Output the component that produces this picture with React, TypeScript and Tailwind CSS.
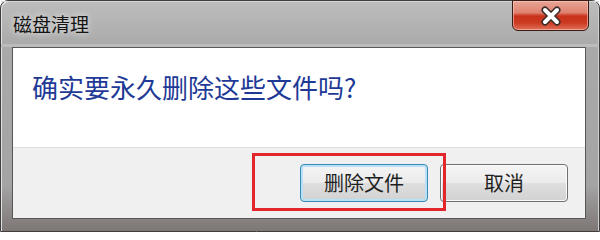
import React from "react";

const font = { fontFamily: '"Noto Sans CJK SC", "Noto Sans", sans-serif' };

function CloseX() {
  return (
    <svg width="26" height="22" viewBox="0 0 26 22">
      <path d="M7 5 L19 17 M19 5 L7 17" stroke="#3a2a28" strokeWidth="7" strokeLinecap="round" />
      <path d="M7 5 L19 17 M19 5 L7 17" stroke="#ffffff" strokeWidth="4" strokeLinecap="round" />
    </svg>
  );
}

export default function App() {
  return (
    <div className="w-[600px] h-[232px] overflow-hidden bg-white">
      <div
        className="relative w-[600px] h-[232px] flex flex-col border border-[#3e3e3e] rounded-t-[8px] bg-[linear-gradient(180deg,#bdbdbd_0%,#a9a9a9_20%,#a4a4a4_80%,#7d7775_100%)] shadow-[inset_1px_1px_0_#e2e2e2,inset_-1px_0_0_#d0d0d0]"
        style={font}
      >
        {/* title bar */}
        <div className="h-[46px] flex items-start justify-between shrink-0 shadow-[inset_0_1px_0_#d8d8d8,inset_0_-3px_0_#bcbcbc]">
          <div className="pl-[12px] pt-[11px] text-[19px] leading-[24px] text-[#141414] [text-shadow:0_0_6px_rgba(255,255,255,0.9)]">
            磁盘清理
          </div>
          <div className="mr-[10px] -mt-px w-[77px] h-[31px] rounded-b-[6px] border border-[#3b1d17] flex items-center justify-center bg-[linear-gradient(180deg,#e9a595_0%,#df8270_40%,#c9321a_52%,#cc3a22_75%,#e0705a_100%)] shadow-[inset_0_0_0_1px_rgba(255,210,200,0.55)]">
            <CloseX />
          </div>
        </div>

        {/* client area */}
        <div className="ml-[11px] mr-[13px] h-[172px] shrink-0 border border-[#585858] flex flex-col bg-[#f0f0f0]">
          <div className="h-[100px] shrink-0 bg-white border-b border-[#dfdfdf] pl-[19px] pt-[22px]">
            <div className="text-[26px] leading-[34px] text-[#1e3a96]">确实要永久删除这些文件吗?</div>
          </div>
          <div className="flex-1 flex justify-end items-start gap-[12px] pr-[17px] pt-[16px]">
            <div className="w-[128px] h-[38px] rounded-[4px] border border-[#3a88b5] flex items-center justify-center text-[20px] text-[#1f1f1f] bg-[linear-gradient(180deg,#f4f4f4_0%,#ececec_48%,#dedede_52%,#d2d2d2_100%)] shadow-[inset_0_0_0_2px_#b7e1f5]">
              删除文件
            </div>
            <div className="w-[128px] h-[38px] rounded-[4px] border border-[#707070] flex items-center justify-center text-[20px] text-[#1f1f1f] bg-[linear-gradient(180deg,#f4f4f4_0%,#ececec_48%,#dedede_52%,#d2d2d2_100%)] shadow-[inset_0_0_0_1px_#fbfbfb]">
              取消
            </div>
          </div>
        </div>

        {/* red highlight annotation */}
        <div className="absolute left-[251px] top-[152px] w-[194px] h-[58px] border-[3px] border-[#e3262b]" />
      </div>
    </div>
  );
}
